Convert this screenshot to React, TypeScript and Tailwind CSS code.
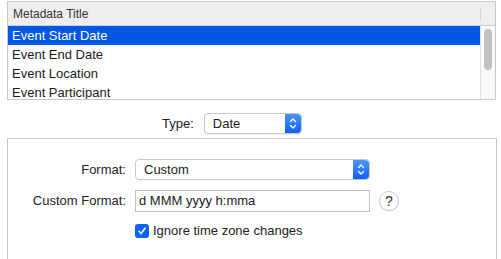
import React from "react";

function Stepper({ w }: { w: string }) {
  return (
    <div
      className={`${w} h-full flex items-center justify-center rounded-r-[4px] bg-gradient-to-b from-[#4b95ff] to-[#0a5ff5]`}
    >
      <svg width="8" height="13" viewBox="0 0 8 13" fill="none">
        <path d="M1.5 4.5 L4 2 L6.5 4.5" stroke="white" strokeWidth="1.3" strokeLinecap="round" strokeLinejoin="round" />
        <path d="M1.5 8.5 L4 11 L6.5 8.5" stroke="white" strokeWidth="1.3" strokeLinecap="round" strokeLinejoin="round" />
      </svg>
    </div>
  );
}

export default function App() {
  const rows = ["Event Start Date", "Event End Date", "Event Location", "Event Participant"];
  return (
    <div
      className="w-[501px] h-[259px] overflow-hidden bg-white text-[13px] text-[#222]"
      style={{ fontFamily: '"Liberation Sans", Arial, sans-serif' }}
    >
      {/* Table */}
      <div className="ml-[7px] mt-[1px] w-[489px] h-[99px] border border-[#c8c8c8] flex flex-col overflow-hidden">
        <div className="h-[24px] bg-[#efefef] border-b border-[#d0d0d0] flex shrink-0">
          <div className="flex-1 flex items-center pl-[5px] text-[12px] text-[#333]">Metadata Title</div>
          <div className="w-[15px] flex items-center">
            <div className="w-px h-[14px] bg-[#d6d6d6]" />
          </div>
        </div>
        <div className="flex flex-1 min-h-0">
          <div className="flex-1 flex flex-col">
            {rows.map((r, i) => (
              <div
                key={r}
                className={`h-[19px] shrink-0 flex items-center pl-[4px] ${i === 0 ? "bg-[#0058e4] text-white" : "text-[#1a1a1a]"}`}
              >
                {r}
              </div>
            ))}
          </div>
          <div className="w-[15px] border-l border-[#e2e2e2] bg-[#fafafa] flex justify-center pt-[3px]">
            <div className="w-[8px] h-[41px] rounded-full bg-[#c2c2c2]" />
          </div>
        </div>
      </div>

      {/* Type row */}
      <div className="mt-[13px] flex items-center pl-[162px] gap-[10px]">
        <span className="text-[#222]">Type:</span>
        <div className="w-[98px] h-[21px] flex border border-[#c8c8c8] rounded-[4px] bg-white shadow-[0_1px_0_rgba(0,0,0,0.05)]">
          <div className="flex-1 flex items-center pl-[8px] text-[#222]">Date</div>
          <Stepper w="w-[16px]" />
        </div>
      </div>

      {/* Group box */}
      <div className="mt-[4px] ml-[7px] w-[490px] h-[140px] border border-[#c8c8c8] relative">
        <div className="mt-[20px] flex flex-col">
          <div className="flex items-center h-[21px]">
            <div className="w-[118px] text-right text-[#222]">Format:</div>
            <div className="ml-[9px] w-[235px] h-[21px] flex border border-[#c8c8c8] rounded-[4px] bg-white">
              <div className="flex-1 flex items-center pl-[8px]">Custom</div>
              <Stepper w="w-[16px]" />
            </div>
          </div>
          <div className="flex items-center h-[22px] mt-[10px]">
            <div className="w-[118px] text-right text-[#222]">Custom Format:</div>
            <div className="ml-[9px] w-[235px] h-[22px] flex items-center border border-[#c0c0c0] pl-[3px] bg-white">
              d MMM yyyy h:mma
            </div>
            <div className="ml-[9px] w-[20px] h-[20px] rounded-full border border-[#c8c8c8] bg-white flex items-center justify-center text-[14px] text-[#333] shadow-[0_1px_1px_rgba(0,0,0,0.08)]">
              ?
            </div>
          </div>
          <div className="flex items-center mt-[9px] pl-[127px]">
            <div className="w-[14px] h-[14px] rounded-[3px] bg-[#0a63f4] flex items-center justify-center">
              <svg width="10" height="10" viewBox="0 0 10 10" fill="none">
                <path d="M2 5.3 L4.1 7.6 L8 2.2" stroke="white" strokeWidth="1.6" strokeLinecap="round" strokeLinejoin="round" />
              </svg>
            </div>
            <span className="ml-[4px] text-[#222]">Ignore time zone changes</span>
          </div>
        </div>
      </div>
    </div>
  );
}
